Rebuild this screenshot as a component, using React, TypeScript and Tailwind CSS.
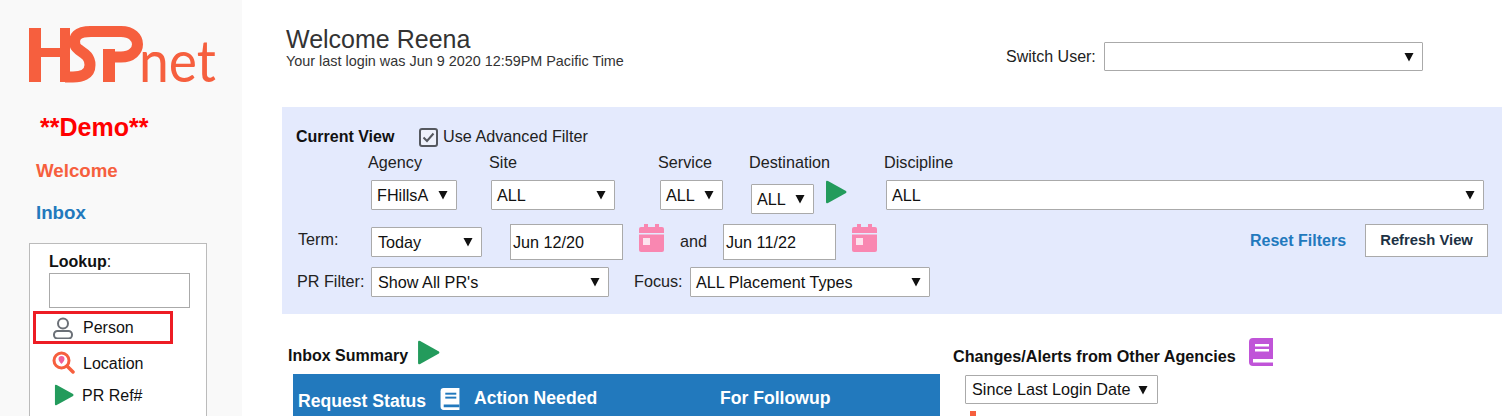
import React from "react";

const Arrow = () => (
  <svg width="10" height="10" viewBox="0 0 10 10" className="shrink-0">
    <polygon points="0.5,1 9.5,1 5,9.5" fill="#111" />
  </svg>
);

const Select = ({ value, className }: { value?: string; className: string }) => (
  <div className={`flex items-center justify-between h-[30px] pl-[6px] pr-[8px] bg-white border border-[#aaaaaa] rounded-[1px] text-[16.200px] text-[#111] shrink-0 ${className}`}>
    <span className="whitespace-nowrap">{value}</span>
    <Arrow />
  </div>
);

const Play = ({ className }: { className?: string }) => (
  <svg viewBox="0 0 22 24" className={className}>
    <path d="M1 2 L1 22 Q1 24 3 23 L21 13 Q22 12 21 11 L3 1 Q1 0 1 2 Z" fill="#239b5c" />
  </svg>
);

const Calendar = ({ className }: { className?: string }) => (
  <svg viewBox="0 0 25 28" className={className}>
    <rect x="5" y="0" width="4" height="6" fill="#f987b1" />
    <rect x="16" y="0" width="4" height="6" fill="#f987b1" />
    <path d="M2 3 H23 Q25 3 25 5 V9 H0 V5 Q0 3 2 3 Z" fill="#f987b1" />
    <path d="M0 10.5 H25 V26 Q25 28 23 28 H2 Q0 28 0 26 Z" fill="#f987b1" />
    <rect x="4" y="14" width="7" height="7" fill="#fde3ee" />
  </svg>
);

const Book = ({ color, ink, className }: { color: string; ink: string; className?: string }) => (
  <svg viewBox="0 0 24 28" className={className}>
    <path d="M4 0 H24 V28 H4 Q0 28 0 24 V4 Q0 0 4 0 Z" fill={color} />
    <rect x="6" y="6" width="14" height="2.5" fill={ink} />
    <rect x="6" y="11" width="14" height="2.5" fill={ink} />
    <rect x="4" y="21" width="20" height="3.5" fill={ink} />
  </svg>
);

const Logo = () => (
  <svg viewBox="0 0 195 75" className="w-[195px] h-[75px] block" aria-label="HSPnet">
    <g fill="#f65f3e">
      <rect x="0" y="3" width="12" height="54" />
      <rect x="12" y="23" width="25" height="9" />
      <rect x="31" y="3" width="10" height="54" />
      <rect x="74" y="24" width="12" height="33" />
    </g>
    <g fill="none" stroke="#f65f3e" strokeWidth="11">
      <path d="M68 6.500 H62 C48 6.500 44 12 46 20 C48 27 61 27 61 40 C61 50 52 52 44 52 H36" />
      <path d="M60 6.500 H92 C114 6.500 114 32 92 32 H76" strokeWidth="11" />
    </g>
    <text x="110" y="57" fontFamily="Lato, sans-serif" fontWeight="400" fontSize="58" fill="#f65f3e" textLength="77" lengthAdjust="spacingAndGlyphs">net</text>
  </svg>
);

export default function App() {
  return (
    <div className="flex h-[416px] w-[1503px] overflow-hidden bg-white font-['Liberation_Sans',Arial,sans-serif] text-[16px] text-[#222]">
      <aside className="w-[242px] shrink-0 bg-[#f9f9f9] pt-[25px]">
        <div className="ml-[29px]"><Logo /></div>
        <h2 className="ml-[40px] mt-[12px] text-[25px] leading-[30px] font-bold text-[#ff0000]">**Demo**</h2>
        <h3 className="ml-[36px] mt-[18px] text-[18.72px] leading-[22px] font-bold text-[#f65f3e]">Welcome</h3>
        <h3 className="ml-[36px] mt-[20px] text-[18.72px] leading-[22px] font-bold text-[#2279bd]">Inbox</h3>
        <div className="ml-[29px] mt-[19px] w-[178px] h-[200px] bg-white border border-[#bbbbbb] pt-[8px]">
          <div className="ml-[19px] leading-[20px] text-[#111]"><b>Lookup</b>:</div>
          <div className="ml-[19px] mt-[1px] w-[141px] h-[35px] border border-[#aaaaaa] bg-white" />
          <div className="ml-[3px] mt-[3px] w-[140px] h-[33px] border-[3px] border-[#ed1c24] flex items-center pl-[17px] text-[#111]">
            <svg viewBox="0 0 20 22" className="w-[20px] h-[22px] mr-[10px]" fill="none" stroke="#6b7077" strokeWidth="2">
              <circle cx="10" cy="6.500" r="5" />
              <rect x="1" y="14" width="18" height="7.500" rx="3.500" />
            </svg>
            Person
          </div>
          <div className="ml-[22px] mt-[7px] h-[26px] flex items-center text-[#111]">
            <svg viewBox="0 0 23 23" className="w-[23px] h-[23px] mr-[8px] mb-[4px] shrink-0" fill="none">
              <circle cx="9.500" cy="9.500" r="7.500" stroke="#f65f3e" strokeWidth="3" />
              <path d="M15 15 L21 21" stroke="#f65f3e" strokeWidth="3.500" strokeLinecap="round" />
              <path d="M9.500 5 a3 3 0 0 1 3 3 c0 2 -3 5 -3 5 s-3 -3 -3 -5 a3 3 0 0 1 3 -3 Z" fill="#f0609a" />
            </svg>
            Location
          </div>
          <div className="ml-[24px] mt-[6px] h-[26px] flex items-center text-[#111]">
            <Play className="w-[20px] h-[22px] mr-[8px] mb-[3px] shrink-0" />
            PR Ref#
          </div>
        </div>
      </aside>

      <main className="flex-1 min-w-0 pl-[40px]">
        <div className="flex h-[107px]">
          <div className="ml-[4px] pt-[25px] w-[720px]">
            <div className="text-[25px] leading-[28px] text-[#333]">Welcome Reena</div>
            <div className="text-[14.400px] leading-[15px] mt-[1px] text-[#333]">Your last login was Jun 9 2020 12:59PM Pacific Time</div>
          </div>
          <div className="flex items-start pt-[42px]">
            <span className="leading-[29px] text-[#222] mr-[8px]">Switch User:</span>
            <Select className="w-[319px] !h-[29px]" />
          </div>
        </div>

        <section className="h-[207px] bg-[#e4eafd] pt-[20px] w-[1220px] text-[16.200px] text-[#222]">
          <div className="flex items-center h-[20px] ml-[14px]">
            <b className="text-[#111] text-[16px] w-[123px]">Current View</b>
            <svg viewBox="0 0 19 19" className="w-[19px] h-[19px] mr-[5px]" fill="none">
              <rect x="1" y="1" width="17" height="17" rx="2" stroke="#55585f" strokeWidth="2" fill="#eef1fb" />
              <path d="M4.500 9.500 L8 13 L14.500 5.500" stroke="#55585f" strokeWidth="2" />
            </svg>
            <span className="mb-[2px]">Use Advanced Filter</span>
          </div>

          <div className="flex h-[20px] leading-[18px] mt-[6px] ml-[86px]">
            <span className="w-[121px]">Agency</span>
            <span className="w-[169px]">Site</span>
            <span className="w-[91px]">Service</span>
            <span className="w-[135px]">Destination</span>
            <span>Discipline</span>
          </div>

          <div className="flex items-start h-[34px] mt-[7px] ml-[89px]">
            <Select value="FHillsA" className="w-[86px] !pl-[5px]" />
            <Select value="ALL" className="w-[124px] ml-[34px] !pl-[5px]" />
            <Select value="ALL" className="w-[63px] ml-[45px] !pl-[5px]" />
            <Select value="ALL" className="w-[63px] ml-[28px] mt-[4px] !pl-[5px]" />
            <Play className="w-[22px] h-[24px] ml-[11px] shrink-0" />
            <Select value="ALL" className="w-[598px] ml-[39px] !pl-[5px]" />
          </div>

          <div className="flex items-start h-[36px] mt-[10px] ml-[16px]">
            <span className="w-[73px] leading-[30px]">Term:</span>
            <Select value="Today" className="w-[111px] mt-[3px]" />
            <div className="w-[113px] h-[36px] ml-[28px] pl-[2px] flex items-center bg-white border border-[#aaaaaa] text-[#111]">Jun 12/20</div>
            <Calendar className="w-[25px] h-[28px] ml-[16px] shrink-0" />
            <span className="ml-[16px] w-[43px] leading-[34px]">and</span>
            <div className="w-[113px] h-[36px] pl-[2px] flex items-center bg-white border border-[#aaaaaa] text-[#111]">Jun 11/22</div>
            <Calendar className="w-[25px] h-[28px] ml-[16px] shrink-0" />
            <a className="ml-[373px] leading-[33px] text-[16px] font-bold text-[#2279bd]">Reset Filters</a>
            <button className="w-[123px] h-[33px] ml-[19px] bg-white border border-[#aaaaaa] text-[14.800px] font-bold text-[#1c3144]">Refresh View</button>
          </div>

          <div className="flex items-center h-[30px] mt-[7px] ml-[15px]">
            <span className="w-[74px] mb-[2px]">PR Filter:</span>
            <Select value="Show All PR's" className="w-[238px]" />
            <span className="ml-[25px] w-[56px] mb-[2px]">Focus:</span>
            <Select value="ALL Placement Types" className="w-[240px] !pl-[5px]" />
          </div>
        </section>

        <div className="flex">
          <div className="w-[666px] shrink-0 ml-[6px]">
            <div className="flex items-center h-[26px] mt-[28px]">
              <b className="text-[16px] text-[#111] mt-[2px]">Inbox Summary</b>
              <Play className="w-[23px] h-[25px] ml-[9px] mb-[5px]" />
            </div>
            <div className="ml-[5px] mt-[6px] w-[647px] h-[60px] bg-[#2279bd] text-white font-bold text-[17.600px] flex items-start">
              <span className="ml-[5px] mt-[17px] w-[142px] leading-[20px] whitespace-nowrap">Request Status</span>
              <Book color="#ffffff" ink="#2279bd" className="w-[20px] h-[22px] mt-[14px] shrink-0" />
              <span className="ml-[14px] mt-[14px] w-[246px] leading-[20px]">Action Needed</span>
              <span className="mt-[14px] leading-[20px]">For Followup</span>
            </div>
          </div>
          <div className="ml-[-1px]">
            <div className="flex items-start mt-[31px] h-[30px]">
              <b className="text-[#111] text-[16.200px] leading-[20px] mt-[1px] whitespace-nowrap">Changes/Alerts from Other Agencies</b>
              <Book color="#c054d8" ink="#ffffff" className="w-[24px] h-[28px] ml-[13px] mt-[-7px]" />
            </div>
            <Select value="Since Last Login Date" className="w-[193px] !h-[29px] ml-[12px] mt-[0px] pr-[9px]" />
            <div className="w-[6px] h-[6px] ml-[17px] mt-[7px] bg-[#f65f3e]" />
          </div>
        </div>
      </main>
    </div>
  );
}
